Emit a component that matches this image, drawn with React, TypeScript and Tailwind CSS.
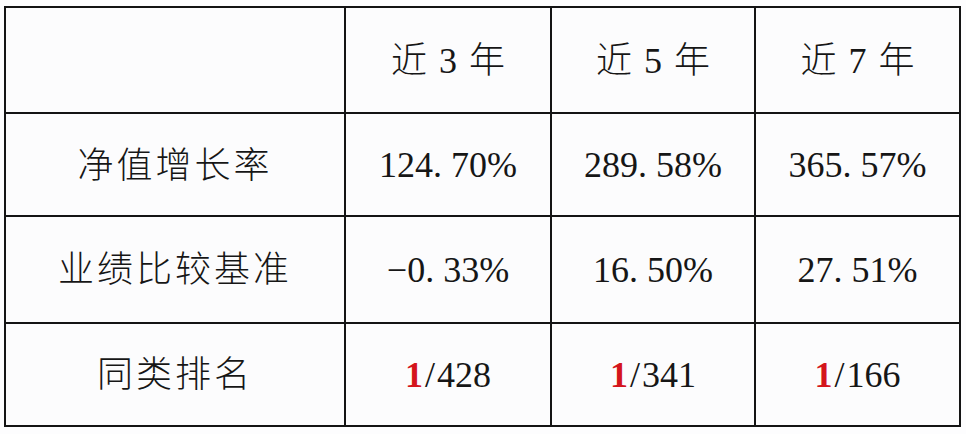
import React from "react";

const cjk = { fontFamily: '"Liberation Serif", "Noto Sans CJK SC", serif' };

function Rank({ total }: { total: string }) {
  return (
    <span className="flex items-center">
      <span className="font-bold text-[#d4151c]">1</span>
      <span className="mx-[2px]">/</span>
      <span>{total}</span>
    </span>
  );
}

function Pct({ a, b }: { a: string; b: string }) {
  return (
    <span>
      {a}.<span className="ml-[9px]">{b}</span>
    </span>
  );
}

function Year({ n }: { n: string }) {
  return (
    <span className="flex items-center">
      <span className="font-light">近</span>
      <span className="mx-[12px]">{n}</span>
      <span className="font-light">年</span>
    </span>
  );
}

export default function App() {
  const cell =
    "flex items-center justify-center border-r-2 border-b-2 border-[#141414] bg-[#fcfcfd]";
  const label = "tracking-[3px] font-light";
  return (
    <div className="w-[966px] h-[434px] bg-[#fdfdfe] pl-[4px] pt-[6px]" style={cjk}>
      <div className="grid grid-cols-[340px_206px_204px_205px] grid-rows-[106px_103px_107px_103px] w-[957px] border-l-2 border-t-2 border-[#141414] text-[36px] leading-none text-[#161616]">
        <div className={cell}></div>
        <div className={cell + " pt-[2px]"}><Year n="3" /></div>
        <div className={cell + " pt-[2px]"}><Year n="5" /></div>
        <div className={cell + " pt-[2px]"}><Year n="7" /></div>

        <div className={cell + " pt-[2px]"}><span className={label}>净值增长率</span></div>
        <div className={cell}><Pct a="124" b="70%" /></div>
        <div className={cell}><Pct a="289" b="58%" /></div>
        <div className={cell}><Pct a="365" b="57%" /></div>

        <div className={cell}><span className={label}>业绩比较基准</span></div>
        <div className={cell}><Pct a="−0" b="33%" /></div>
        <div className={cell}><Pct a="16" b="50%" /></div>
        <div className={cell}><Pct a="27" b="51%" /></div>

        <div className={cell}><span className={label}>同类排名</span></div>
        <div className={cell}><Rank total="428" /></div>
        <div className={cell}><Rank total="341" /></div>
        <div className={cell}><Rank total="166" /></div>
      </div>
    </div>
  );
}
